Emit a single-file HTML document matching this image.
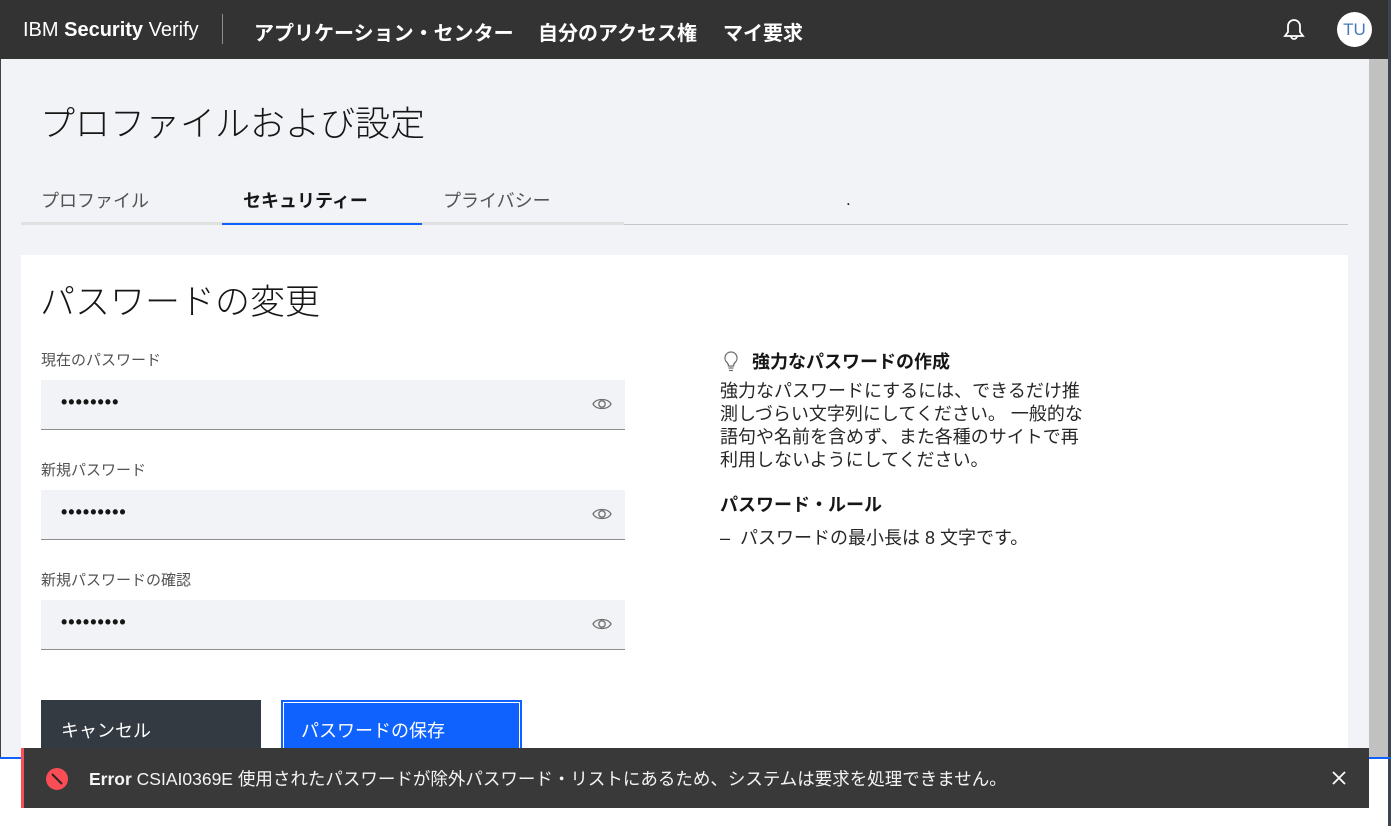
<!DOCTYPE html><html><head><meta charset="utf-8"><style>
*{box-sizing:border-box;margin:0;padding:0}
body{width:1391px;height:826px;overflow:hidden;position:relative;background:#fff;font-family:"Liberation Sans","Noto Sans CJK JP",sans-serif;color:#161616}
.hdr{position:absolute;left:0;top:0;width:1391px;height:59px;background:#333}
.hdr span{position:absolute;color:#fff;top:17px;font-size:20px}
.main{position:absolute;left:1px;top:59px;width:1368px;height:699px;background:#f2f3f6}
.sb{position:absolute;left:1369px;top:59px;width:19px;height:699px;background:#c1c1c1}
.rb{position:absolute;left:1388px;top:0;width:3px;height:826px;background:#3c4450}
.lb{position:absolute;left:0;top:59px;width:1px;height:699px;background:#3c4450}
.blue{position:absolute;left:0;top:757px;width:1391px;height:2px;background:#0f62fe}
.t{position:absolute;white-space:nowrap}
.field{position:absolute;left:41px;width:584px;height:50px;background:#f2f3f6;border-bottom:1px solid #8d8d8d}
.field .d{position:absolute;left:20px;top:12px;font-size:18px;letter-spacing:1px;font-weight:bold}
.field svg{position:absolute;right:13px;top:16px}
.lbl{position:absolute;left:41px;font-size:15px;color:#525252}
</style></head><body>
<div class="hdr">
<span style="left:23px;font-size:20px;top:19px">IBM <b>Security</b> Verify</span>
<div style="position:absolute;left:222px;top:14px;width:1px;height:30px;background:#8d8d8d"></div>
<span style="left:254px;font-weight:bold">アプリケーション・センター</span>
<span style="left:538px;font-weight:bold">自分のアクセス権</span>
<span style="left:723px;font-weight:bold">マイ要求</span>
<svg style="position:absolute;left:1281px;top:15px" width="26" height="28" viewBox="0 0 26 28" fill="none" stroke="#fff" stroke-width="1.8"><path d="M4 21h18l-3-4v-6a6 6 0 0 0-12 0v6z"/><path d="M10 21a3 3 0 0 0 6 0"/></svg>
<div style="position:absolute;left:1337px;top:12px;width:35px;height:35px;border-radius:50%;background:#fff;color:#4a78b8;font-size:17px;text-align:center;line-height:35px">TU</div>
</div>
<div class="main"></div>
<div class="lb"></div><div class="sb"></div><div class="rb"></div>
<div class="t" style="left:40px;top:96px;font-size:35px;font-weight:300">プロファイルおよび設定</div>
<div class="t" style="left:41px;top:187px;font-size:18px;color:#525252">プロファイル</div>
<div class="t" style="left:243px;top:187px;font-size:18px;font-weight:bold">セキュリティー</div>
<div class="t" style="left:443px;top:187px;font-size:18px;color:#525252">プライバシー</div>
<div class="t" style="left:846px;top:190px;font-size:17px">.</div>
<div style="position:absolute;left:21px;top:224px;width:1327px;height:1px;background:#c6c6c6"></div>
<div style="position:absolute;left:21px;top:222px;width:603px;height:3px;background:#e0e0e0"></div>
<div style="position:absolute;left:222px;top:223px;width:200px;height:2px;background:#0f62fe"></div>
<div style="position:absolute;left:21px;top:255px;width:1327px;height:503px;background:#fff"></div>
<div class="t" style="left:40px;top:274px;font-size:35px;font-weight:300">パスワードの変更</div>
<div class="lbl" style="top:349px">現在のパスワード</div>
<div class="field" style="top:380px"><span class="d">••••••••</span><svg width="20" height="16" viewBox="0 0 20 16" fill="none" stroke="#6f6f6f" stroke-width="1.3"><path d="M1 8C4 2 16 2 19 8C16 14 4 14 1 8Z"/><circle cx="10" cy="8" r="3.2"/></svg></div>
<div class="lbl" style="top:459px">新規パスワード</div>
<div class="field" style="top:490px"><span class="d">•••••••••</span><svg width="20" height="16" viewBox="0 0 20 16" fill="none" stroke="#6f6f6f" stroke-width="1.3"><path d="M1 8C4 2 16 2 19 8C16 14 4 14 1 8Z"/><circle cx="10" cy="8" r="3.2"/></svg></div>
<div class="lbl" style="top:569px">新規パスワードの確認</div>
<div class="field" style="top:600px"><span class="d">•••••••••</span><svg width="20" height="16" viewBox="0 0 20 16" fill="none" stroke="#6f6f6f" stroke-width="1.3"><path d="M1 8C4 2 16 2 19 8C16 14 4 14 1 8Z"/><circle cx="10" cy="8" r="3.2"/></svg></div>
<svg style="position:absolute;left:722px;top:349px" width="18" height="24" viewBox="0 0 18 24" fill="none" stroke="#6f6f6f" stroke-width="1.3"><path d="M9 3a6 6 0 0 0-4 10.5c1 1 1.5 2 1.5 3.5h5c0-1.5.5-2.5 1.5-3.5A6 6 0 0 0 9 3z"/><path d="M6.5 19h5M7 21.5h4"/></svg>
<div class="t" style="left:752px;top:348px;font-size:18px;font-weight:bold">強力なパスワードの作成</div>
<div class="t" style="left:720px;top:380px;font-size:18px;line-height:23px;color:#262626">強力なパスワードにするには、できるだけ推<br>測しづらい文字列にしてください。 一般的な<br>語句や名前を含めず、また各種のサイトで再<br>利用しないようにしてください。</div>
<div class="t" style="left:720px;top:491px;font-size:18px;font-weight:bold">パスワード・ルール</div>
<div class="t" style="left:720px;top:524px;font-size:18px;color:#262626">–&nbsp; パスワードの最小長は 8 文字です。</div>
<div style="position:absolute;left:41px;top:700px;width:220px;height:58px;background:#343a42"></div>
<div class="t" style="left:61px;top:717px;font-size:18px;color:#fff">キャンセル</div>
<div style="position:absolute;left:281px;top:700px;width:241px;height:58px;background:#0f62fe;border:2px solid #0f62fe;box-shadow:inset 0 0 0 1px #fff"></div>
<div class="t" style="left:301px;top:717px;font-size:18px;color:#fff">パスワードの保存</div>
<div class="blue"></div>
<div style="position:absolute;left:21px;top:748px;width:1348px;height:60px;background:#393939;border-left:3px solid #fa4d56"></div>
<svg style="position:absolute;left:45px;top:767px" width="24" height="24" viewBox="0 0 24 24"><circle cx="12" cy="12" r="11" fill="#fa4d56"/><path d="M7 7l10 10" stroke="#262626" stroke-width="2"/></svg>
<div class="t" style="left:89px;top:766px;font-size:17.5px;color:#f4f4f4"><b>Error</b> CSIAI0369E 使用されたパスワードが除外パスワード・リストにあるため、システムは要求を処理できません。</div>
<svg style="position:absolute;left:1332px;top:771px" width="14" height="14" viewBox="0 0 14 14" stroke="#fff" stroke-width="1.8"><path d="M1 1l12 12M13 1L1 13"/></svg>
</body></html>
